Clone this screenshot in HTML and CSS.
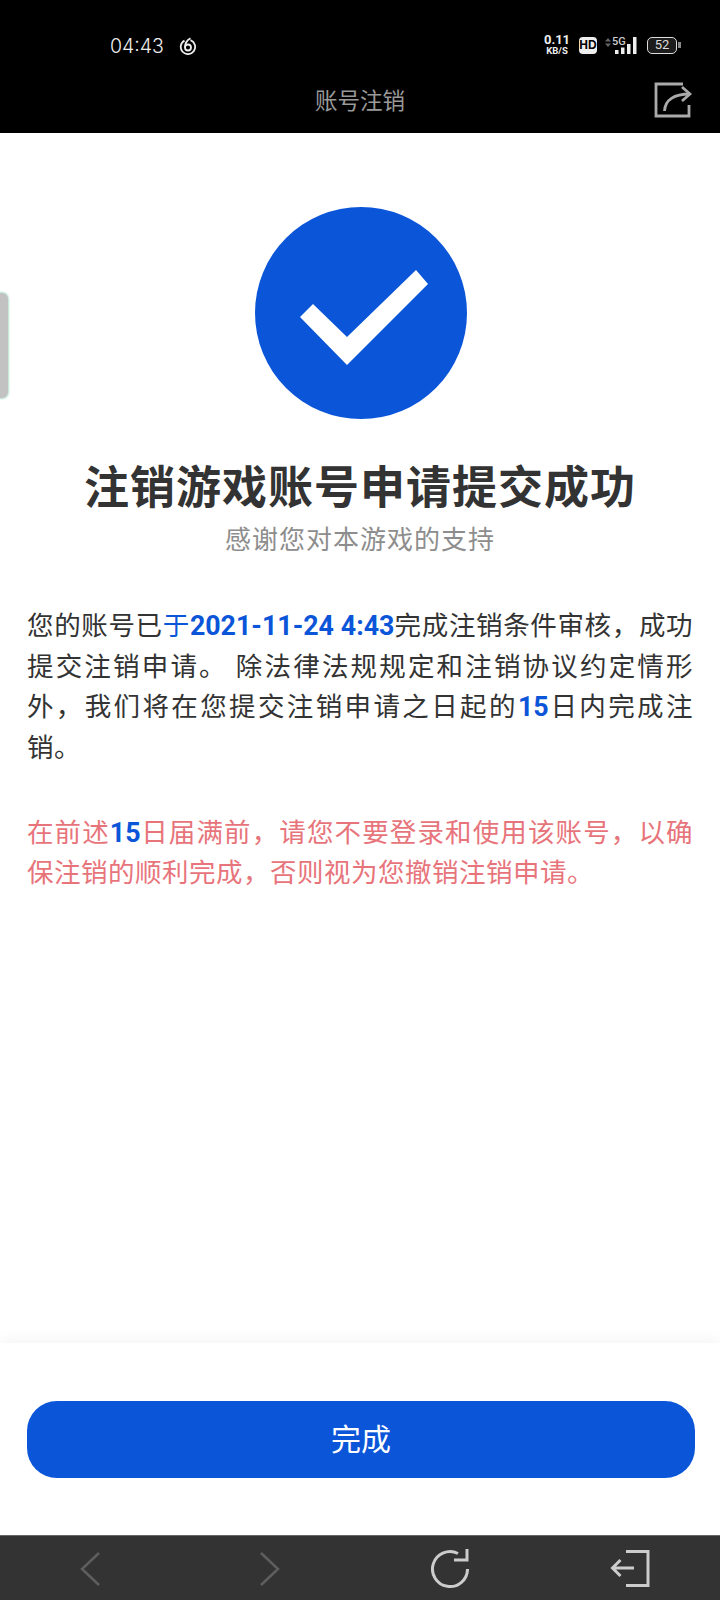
FILE: index.html
```html
<!DOCTYPE html>
<html lang="zh-CN">
<head>
<meta charset="utf-8">
<title>账号注销</title>
<link rel="stylesheet" href="styles.css">
</head>
<body>
<div class="app">
  <header class="top">
    <div class="status">
      <div class="status-left">
        <span class="clock">04:43</span>
        <svg class="netease" width="18" height="18" viewBox="0 0 18 18" fill="none" stroke="#eee" stroke-width="1.800"><path d="M11.500 3.200A7.200 7.200 0 1 1 5.500 3.600"/><path d="M6 10.500C6 6.500 8 3 11.500 1.200"/><circle cx="9" cy="10.500" r="3"/></svg>
      </div>
      <div class="status-right">
        <div class="speed"><span class="speed-num">0.11</span><span class="speed-unit">KB/S</span></div>
        <span class="hd">HD</span>
        <div class="signal">
          <svg class="updown" width="6" height="9" viewBox="0 0 6 9" fill="#666"><path d="M3 0L6 3.500H0ZM3 9L0 5.500H6Z"/></svg>
          <span class="five-g">5G</span>
          <svg class="bars" width="22" height="17" viewBox="0 0 22 17"><g fill="#eee"><rect x="0" y="13" width="3.500" height="4"/><rect x="6" y="10.500" width="3.500" height="6.500"/><rect x="12" y="7" width="3.500" height="10"/><rect x="18" y="0" width="3.500" height="17"/></g></svg>
        </div>
        <div class="battery"><span class="battery-body">52</span><span class="battery-cap"></span></div>
      </div>
    </div>
    <div class="titlebar">
      <h1 class="page-title">账号注销</h1>
      <svg class="share" width="38" height="38" viewBox="0 0 38 38" fill="none" stroke="#aaa" stroke-width="2.800"><path d="M35 23V34H2V2H29"/><path d="M10.500 29C11 18 20 12 36 12"/><path d="M28 5L36 12L28 19"/></svg>
    </div>
  </header>
  <main class="content">
    <svg class="check" width="212" height="212" viewBox="0 0 212 212"><circle cx="106" cy="106" r="106" fill="#0b55d9"/><path d="M45 110L58 97L92 130L161 63L173 77L92 158Z" fill="#fff"/></svg>
    <h2 class="headline">注销游戏账号申请提交成功</h2>
    <p class="subhead">感谢您对本游戏的支持</p>
    <p class="body-text">您的账号已<b class="blue"><span class="thin">于</span>2021-11-24 4:43</b>完成注销条件审核，成功提交注销申请。 除法律法规规定和注销协议约定情形外，我们将在您提交注销申请之日起的<b class="blue">15</b>日内完成注销。</p>
    <p class="body-text warn">在前述<b class="blue">15</b>日届满前，请您不要登录和使用该账号，以确保注销的顺利完成，否则视为您撤销注销申请。</p>
  </main>
  <div class="handle"></div>
  <footer class="action"><button class="done">完成</button></footer>
  <nav class="toolbar">
    <svg width="22" height="36" viewBox="0 0 22 36" fill="none" stroke="#5e5e5e" stroke-width="2.500"><path d="M20 2L3 18L20 34"/></svg>
    <svg width="22" height="36" viewBox="0 0 22 36" fill="none" stroke="#5e5e5e" stroke-width="2.500"><path d="M2 2L19 18L2 34"/></svg>
    <svg width="38" height="40" viewBox="0 0 38 40" fill="none" stroke="#ccc" stroke-width="3"><path d="M27 4.500A17.500 17.500 0 1 0 36.500 20"/><path d="M23 11H36V0"/></svg>
    <svg width="40" height="38" viewBox="0 0 40 38" fill="none" stroke="#ccc" stroke-width="3"><path d="M16 1.500H38V35.500H16"/><path d="M24 18H3M10.500 10L2.500 18L10.500 26"/></svg>
  </nav>
</div>
</body>
</html>
```
FILE: styles.css
```css
* { box-sizing: border-box; }
html, body { margin: 0; padding: 0; }
body { width: 720px; height: 1600px; background: #fff; font-family: "Noto Sans CJK SC", "Roboto", sans-serif; overflow: hidden; }
.app { position: relative; width: 720px; height: 1600px; display: flex; flex-direction: column; }
.top { height: 133px; background: #000; flex: none; display: flex; flex-direction: column; }
.status { height: 84px; padding: 26px 39px 0 110px; display: flex; justify-content: space-between; align-items: flex-start; }
.status-left { display: flex; align-items: center; gap: 15px; height: 40px; }
.clock { font: 300 19.500px "Inter", sans-serif; color: #eee; }
.status-right { display: flex; align-items: center; gap: 11px; height: 38px; }
.speed { display: flex; flex-direction: column; align-items: center; color: #eee; font-family: "Roboto", sans-serif; font-weight: 700; width: 22px; }
.speed-num { font-size: 13px; line-height: 12px; }
.speed-unit { font-size: 9.500px; line-height: 10px; }
.hd { background: #eee; color: #000; font: 700 12px/17px "Liberation Sans", sans-serif; width: 18px; height: 17px; text-align: center; border-radius: 4px; }
.signal { position: relative; width: 31px; height: 17px; margin-left: -3px; }
.updown { position: absolute; left: 0; top: 1px; }
.five-g { position: absolute; left: 7px; top: 0; font: 500 11px/10px "Roboto", sans-serif; color: #ccc; }
.bars { position: absolute; left: 10px; top: 0; }
.battery { display: flex; align-items: center; gap: 1px; }
.battery-body { width: 30px; height: 17px; border: 1.500px solid #ddd; border-radius: 5px; background: #1c1c1c; color: #ddd; font: 400 13px/14px "Roboto", sans-serif; text-align: center; }
.battery-cap { width: 3px; height: 6px; background: #888; }
.titlebar { flex: 1; position: relative; display: flex; justify-content: center; align-items: center; padding-bottom: 18px; }
.page-title { margin: 0; font-size: 22.500px; font-weight: 400; color: #999; }
.share { position: absolute; right: 28px; top: -1px; }
.content { flex: 1; padding: 74px 27px 0; display: flex; flex-direction: column; align-items: center; }
.check { flex: none; margin-left: 1px; }
.headline { margin: 38px 0 0; font-size: 45px; line-height: 56px; font-weight: 700; color: #333; white-space: nowrap; letter-spacing: 1px; }
.subhead { margin: 7px 0 0; font-size: 26px; line-height: 36px; color: #8d8d8d; letter-spacing: 1px; }
.body-text { width: 666px; margin: 48px 0 0; font-size: 26.500px; line-height: 40.500px; color: #333; text-align: justify; letter-spacing: .5px; }
.warn { color: #e8747b; margin-top: 44.500px; }
.blue { color: #0b55d9; font-weight: 700; font-family: "Roboto", "Noto Sans CJK SC", sans-serif; font-size: 26.800px; line-height: 1; letter-spacing: 0; }
.thin { font-weight: 400; font-family: "Noto Sans CJK SC", sans-serif; font-size: 26.500px; letter-spacing: .5px; }
.handle { position: absolute; left: -6px; top: 293px; width: 14px; height: 105px; border-radius: 6px; background: #c2c2c2; box-shadow: 0 0 2px 1px #b5e3cf; }
.action { height: 192px; flex: none; background: #fff; padding: 58px 0 0 2px; box-shadow: 0 -6px 10px rgba(0,0,0,.03); display: flex; justify-content: center; }
.done { width: 668px; height: 77px; border: 0; border-radius: 30px; background: #0b55d9; color: #fff; font-family: "Noto Sans CJK SC", sans-serif; font-size: 30px; padding: 0 0 6px; }
.toolbar { height: 65px; flex: none; background: #333; border-top: 1px solid #666; display: grid; grid-template-columns: repeat(4, 180px); justify-items: center; align-items: center; padding-top: 2px; }
```
